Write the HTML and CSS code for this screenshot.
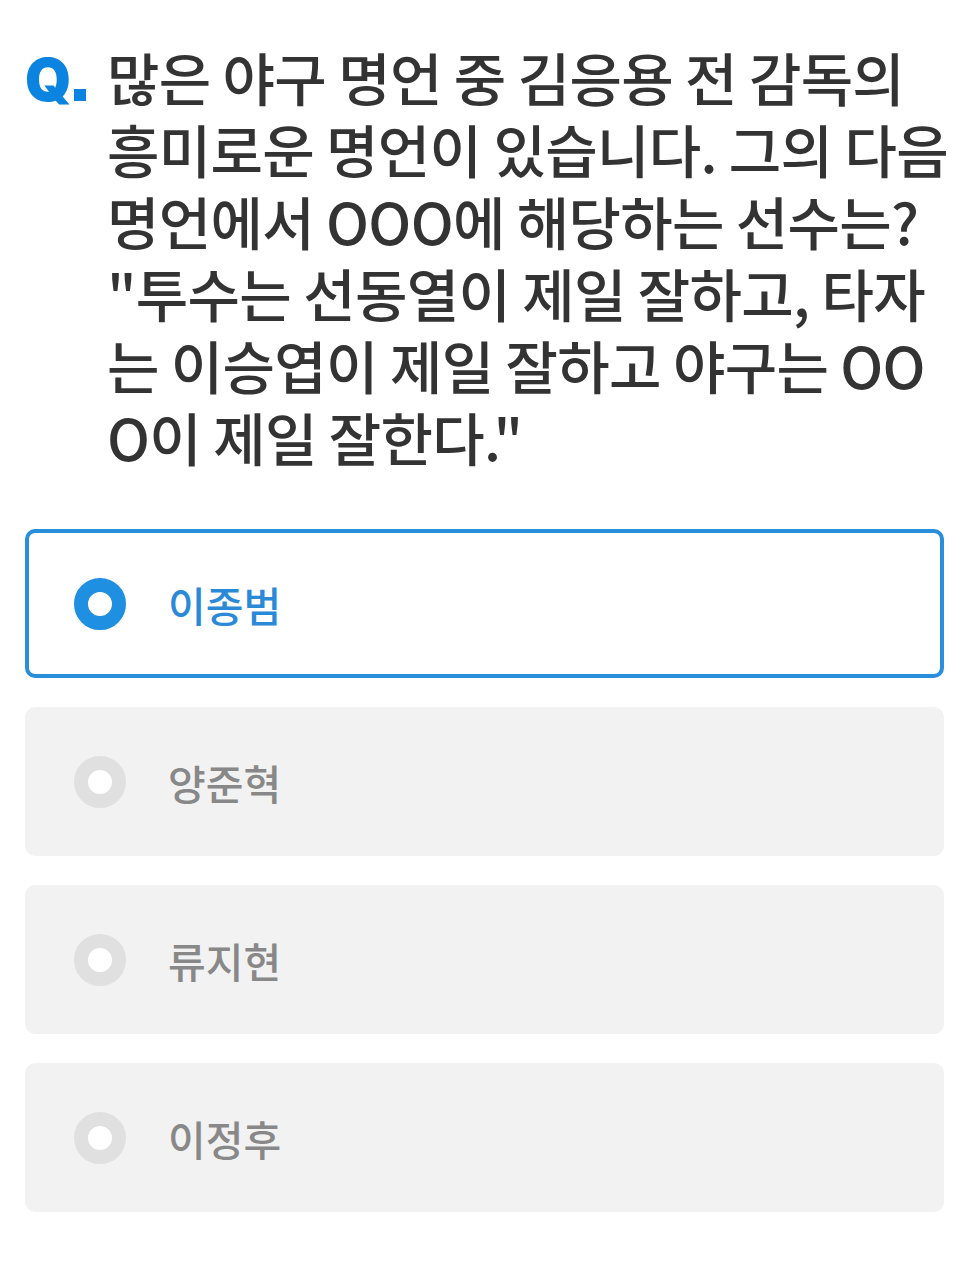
FILE: index.html
```html
<!DOCTYPE html>
<html>
<head>
    <title>Quiz</title>
    <link rel="stylesheet" href="styles.css">
</head>
<body>
    <div class="quiz">
        <!-- Question -->
        <div class="question">
            <div class="q-mark">Q<span class="q-dot"></span></div>
            <p class="q-text">많은 야구 명언 중 김응용 전 감독의<br>흥미로운 명언이 있습니다. 그의 다음<br>명언에서 OOO에 해당하는 선수는?<br>"투수는 선동열이 제일 잘하고, 타자<br>는 이승엽이 제일 잘하고 야구는 OO<br>O이 제일 잘한다."</p>
        </div>

        <!-- Answers -->
        <ul class="options">
            <li class="option selected">
                <span class="radio"></span>
                <span class="label">이종범</span>
            </li>
            <li class="option">
                <span class="radio"></span>
                <span class="label">양준혁</span>
            </li>
            <li class="option">
                <span class="radio"></span>
                <span class="label">류지현</span>
            </li>
            <li class="option">
                <span class="radio"></span>
                <span class="label">이정후</span>
            </li>
        </ul>
    </div>
</body>
</html>
```

FILE: styles.css
```css
body {
    margin: 0;
    background: #fff;
    font-family: "Noto Sans CJK KR", "Noto Sans", sans-serif;
}
.quiz {
    padding: 40px 28px 40px 25px;
}
.question {
    display: flex;
    align-items: flex-start;
}
.q-mark {
    flex: 0 0 82px;
    display: flex;
    align-items: baseline;
    font-family: Inter, "Noto Sans", sans-serif;
    font-weight: 900;
    font-size: 59px;
    line-height: 80px;
    color: #0a84e0;
}
.q-dot {
    width: 12px;
    height: 12px;
    margin-left: 3px;
    background: #0a84e0;
}
.q-text {
    margin: 0;
    font-size: 57px;
    font-weight: 500;
    line-height: 72px;
    color: #333;
    letter-spacing: -0.7px;
    white-space: nowrap;
}
.options {
    list-style: none;
    margin: 57px 0 0;
    padding: 0;
    display: flex;
    flex-direction: column;
    gap: 29px;
}
.option {
    display: flex;
    align-items: center;
    height: 141px;
    padding: 0 45px;
    border: 4px solid transparent;
    border-radius: 10px;
    background: #f2f2f2;
}
.option.selected {
    background: #fff;
    border-color: #2a8fdb;
}
.radio {
    width: 24px;
    height: 24px;
    border: 14px solid #e0e0e0;
    border-radius: 50%;
    background: #fff;
    flex-shrink: 0;
}
.selected .radio {
    border-color: #1e8fe1;
}
.label {
    margin-left: 42px;
    font-size: 41px;
    font-weight: 500;
    color: #888;
}
.selected .label {
    color: #2a8ad8;
}
```
